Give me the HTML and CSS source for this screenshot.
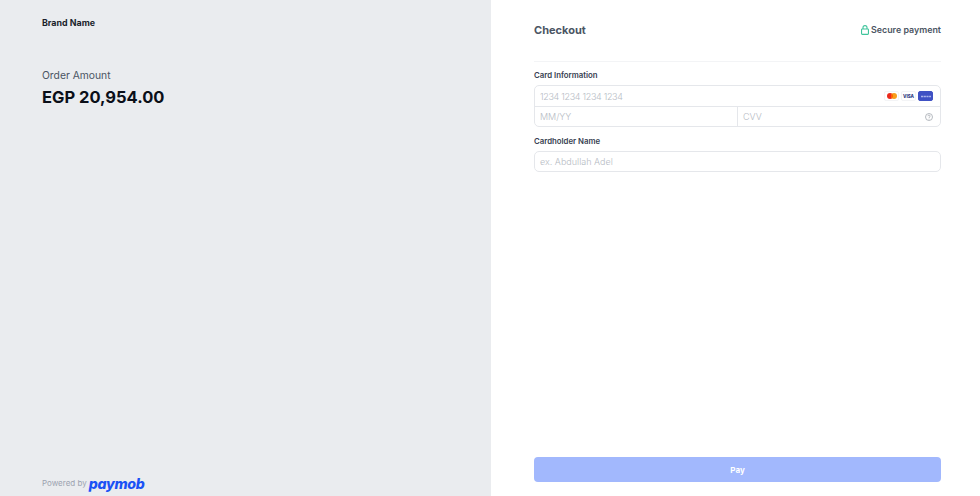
FILE: index.html
```html
<!DOCTYPE html>
<html lang="en">
<head>
  <meta charset="UTF-8" />
  <meta name="viewport" content="width=device-width, initial-scale=1.0" />
  <title>Checkout</title>
  <link rel="stylesheet" href="styles.css">
</head>
<body>
  <div class="page">
    <aside class="summary">
      <div>
        <div class="brand">Brand Name</div>
        <div class="order-label">Order Amount</div>
        <div class="order-amount">EGP 20,954.00</div>
      </div>
      <div class="powered">Powered by <span class="paymob">paymob</span></div>
    </aside>

    <main class="checkout">
      <div>
        <header class="checkout-head">
          <h1>Checkout</h1>
          <div class="secure">
            <svg class="lock" width="8" height="10" viewBox="0 0 8 10" fill="none" stroke="#3fc49b" stroke-width="1.1">
              <rect x="0.55" y="4" width="6.9" height="5.4" rx="0.8" />
              <path d="M2 4V2.6a2 2 0 0 1 4 0V4" />
            </svg>
            <span>Secure payment</span>
          </div>
        </header>

        <label class="field-label">Card Information</label>
        <div class="card-box">
          <div class="card-row">
            <span class="placeholder card-number">1234 1234 1234 1234</span>
            <div class="card-icons">
              <span class="card-icon">
                <svg width="10" height="6" viewBox="0 0 10 6">
                  <circle cx="3" cy="3" r="3" fill="#eb2a1c" />
                  <circle cx="7" cy="3" r="3" fill="#f79e1b" />
                  <path d="M5 0.76a3 3 0 0 1 0 4.48a3 3 0 0 1 0-4.48z" fill="#ff5f00" />
                </svg>
              </span>
              <span class="card-icon visa">VISA</span>
              <span class="card-icon amex">
                <svg width="10" height="3" viewBox="0 0 10 3" stroke="#aab4ec" stroke-width="1.4">
                  <path d="M0 1.5h10" stroke-dasharray="2.2 0.5" />
                </svg>
              </span>
            </div>
          </div>
          <div class="card-split">
            <div class="card-cell"><span class="placeholder">MM/YY</span></div>
            <div class="card-cell">
              <span class="placeholder">CVV</span>
              <svg width="8" height="8" viewBox="0 0 8 8" fill="none" stroke="#a3a8b0" stroke-width="0.8">
                <circle cx="4" cy="4" r="3.5" />
                <path d="M2.9 3.2a1.1 1.1 0 1 1 1.6 1L4 4.6v0.5" />
                <path d="M4 5.8v0.6" />
              </svg>
            </div>
          </div>
        </div>

        <label class="field-label name-label">Cardholder Name</label>
        <div class="name-input"><span class="placeholder">ex. Abdullah Adel</span></div>
      </div>

      <button class="pay" type="button">Pay</button>
    </main>
  </div>
</body>
</html>
```

FILE: styles.css
```css
* {
  box-sizing: border-box;
  margin: 0;
  padding: 0;
  font-family: 'Inter', 'Liberation Sans', sans-serif;
}
body {
  background: #fff;
  color: #333;
}
.page {
  display: flex;
  height: 496px;
  overflow: hidden;
}
.summary {
  width: 491px;
  background: #eaecef;
  padding: 17px 42px 5px;
  display: flex;
  flex-direction: column;
  justify-content: space-between;
}
.brand {
  font-size: 8.9px;
  line-height: 12px;
  font-weight: 700;
  color: #1a1f2b;
}
.order-label {
  margin-top: 40px;
  font-size: 10.3px;
  line-height: 13px;
  font-weight: 400;
  color: #4b5563;
}
.order-amount {
  margin-top: 5px;
  font-size: 16.5px;
  line-height: 20px;
  font-weight: 700;
  color: #0b0f19;
}
.powered {
  display: flex;
  align-items: center;
  gap: 2px;
  height: 16px;
  font-size: 8px;
  color: #9ca3af;
}
.paymob {
  font-size: 14.2px;
  font-weight: 800;
  font-style: italic;
  letter-spacing: -0.3px;
  color: #1b52f5;
}
.checkout {
  flex: 1;
  padding: 0 39px 14px 43px;
  display: flex;
  flex-direction: column;
  justify-content: space-between;
}
.checkout-head {
  height: 62px;
  padding-top: 23px;
  border-bottom: 1px solid #f3f4f6;
  display: flex;
  justify-content: space-between;
  align-items: flex-start;
}
h1 {
  font-size: 11px;
  line-height: 14px;
  font-weight: 700;
  color: #4b5563;
}
.secure {
  display: flex;
  align-items: center;
  gap: 2px;
  font-size: 8.9px;
  line-height: 14px;
  font-weight: 600;
  color: #4b5563;
}
.field-label {
  display: block;
  margin-top: 8px;
  margin-bottom: 5px;
  font-size: 7.8px;
  line-height: 10px;
  font-weight: 600;
  color: #374151;
}
.name-label {
  margin-top: 9px;
}
.card-box {
  height: 42px;
  border: 1px solid #e5e7eb;
  border-radius: 5px;
}
.card-row {
  height: 21px;
  padding: 0 7px 0 5px;
  border-bottom: 1px solid #e5e7eb;
  display: flex;
  align-items: center;
  justify-content: space-between;
}
.card-split {
  height: 19px;
  display: flex;
}
.card-cell {
  flex: 1;
  padding: 0 7px 0 5px;
  display: flex;
  align-items: center;
  justify-content: space-between;
}
.card-cell + .card-cell {
  border-left: 1px solid #e5e7eb;
}
.placeholder {
  font-size: 9px;
  font-weight: 300;
  color: #b6bbc4;
}
.card-number {
  letter-spacing: -0.3px;
}
.card-icons {
  display: flex;
  align-items: center;
  gap: 2px;
}
.card-icon {
  width: 15px;
  height: 10px;
  border: 1px solid #f3f4f6;
  border-radius: 2px;
  background: #fff;
  display: flex;
  align-items: center;
  justify-content: center;
}
.visa {
  font-size: 4.5px;
  font-weight: 800;
  color: #2e3a80;
}
.amex {
  background: #3f51c4;
  border-color: #3f51c4;
}
.name-input {
  height: 21px;
  padding: 0 5px;
  border: 1px solid #e5e7eb;
  border-radius: 5px;
  display: flex;
  align-items: center;
}
.pay {
  height: 25px;
  border: none;
  border-radius: 4px;
  background: #a2b8fd;
  color: #fff;
  font-size: 8px;
  font-weight: 700;
}
```
